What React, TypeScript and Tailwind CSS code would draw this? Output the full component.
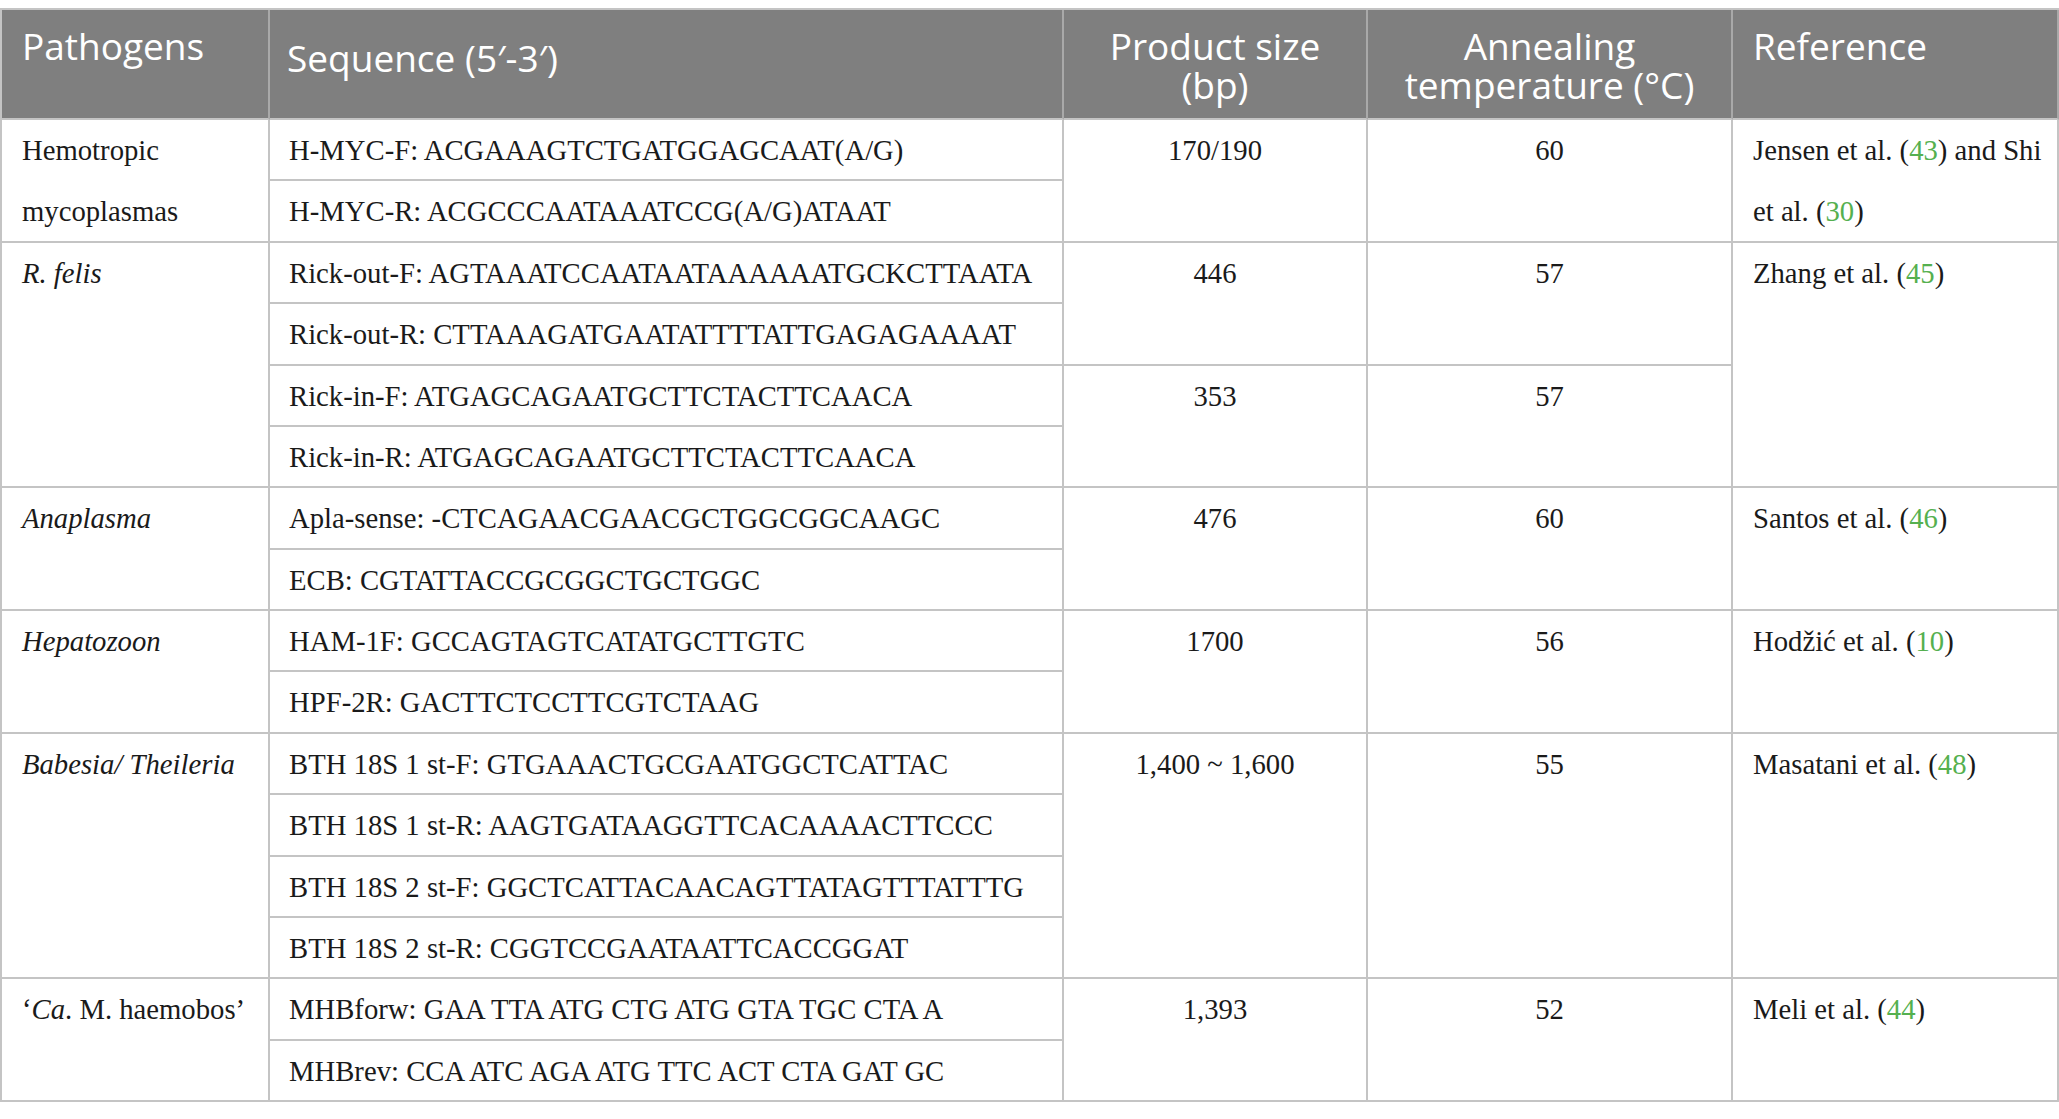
import React from 'react';

type Ref = { name: string; num: string; tail?: string };

const serif = { fontFamily: '"Liberation Serif", "Times New Roman", serif' };
const sans = { fontFamily: '"Open Sans", "Noto Sans", sans-serif' };

const Cite: React.FC<{ r: Ref }> = ({ r }) => (
    <>
        {r.name} (<span className="text-[#55b04f]">{r.num}</span>){r.tail}
    </>
);

const head = "border-r-2 border-b-2 border-r-[#a9a9a9] border-b-[#c4c4c4] bg-[#7f7f7f] text-white text-[37px] leading-[39px]";
const cell = "border-r-2 border-b-2 border-[#c4c4c4] leading-[61.375px] text-[28.7px] text-[#1a1a1a]";

export default function App() {
    return (
        <div className="min-h-screen bg-white pt-[8px]">
            <div
                className="grid w-full grid-cols-[268px_794px_304px_365px_1fr] grid-rows-[110px_repeat(16,61.375px)] border-l-2 border-t-2 border-[#c4c4c4]"
                style={serif}
            >
                {/* header */}
                <div className={`${head} pl-5 pt-4`} style={sans}>Pathogens</div>
                <div className={`${head} pl-[17px] pt-7`} style={sans}>Sequence (5′-3′)</div>
                <div className={`${head} pt-4 text-center`} style={sans}>
                    <div>Product size</div>
                    <div>(bp)</div>
                </div>
                <div className={`${head} pt-4 text-center`} style={sans}>
                    <div>Annealing</div>
                    <div>temperature (°C)</div>
                </div>
                <div className={`${head} pl-5 pt-4`} style={sans}>Reference</div>

                {/* Hemotropic mycoplasmas */}
                <div className={`${cell} row-span-2 pl-5 pr-2`}>Hemotropic mycoplasmas</div>
                <div className={`${cell} pl-[19px] whitespace-nowrap`}>H-MYC-F: ACGAAAGTCTGATGGAGCAAT(A/G)</div>
                <div className={`${cell} row-span-2 text-center`}>170/190</div>
                <div className={`${cell} row-span-2 text-center`}>60</div>
                <div className={`${cell} row-span-2 pl-5 pr-2`}>
                    <Cite r={{ name: 'Jensen et al.', num: '43' }} /> and Shi <Cite r={{ name: 'et al.', num: '30' }} />
                </div>
                <div className={`${cell} pl-[19px] whitespace-nowrap`}>H-MYC-R: ACGCCCAATAAATCCG(A/G)ATAAT</div>

                {/* R. felis */}
                <div className={`${cell} row-span-4 pl-5 pr-2 italic`}>R. felis</div>
                <div className={`${cell} pl-[19px] whitespace-nowrap`}>Rick-out-F: AGTAAATCCAATAATAAAAAATGCKCTTAATA</div>
                <div className={`${cell} row-span-2 text-center`}>446</div>
                <div className={`${cell} row-span-2 text-center`}>57</div>
                <div className={`${cell} row-span-4 pl-5 pr-2`}>
                    <Cite r={{ name: 'Zhang et al.', num: '45' }} />
                </div>
                <div className={`${cell} pl-[19px] whitespace-nowrap`}>Rick-out-R: CTTAAAGATGAATATTTTATTGAGAGAAAAT</div>
                <div className={`${cell} pl-[19px] whitespace-nowrap`}>Rick-in-F: ATGAGCAGAATGCTTCTACTTCAACA</div>
                <div className={`${cell} row-span-2 text-center`}>353</div>
                <div className={`${cell} row-span-2 text-center`}>57</div>
                <div className={`${cell} pl-[19px] whitespace-nowrap`}>Rick-in-R: ATGAGCAGAATGCTTCTACTTCAACA</div>

                {/* Anaplasma */}
                <div className={`${cell} row-span-2 pl-5 pr-2 italic`}>Anaplasma</div>
                <div className={`${cell} pl-[19px] whitespace-nowrap`}>Apla-sense: -CTCAGAACGAACGCTGGCGGCAAGC</div>
                <div className={`${cell} row-span-2 text-center`}>476</div>
                <div className={`${cell} row-span-2 text-center`}>60</div>
                <div className={`${cell} row-span-2 pl-5 pr-2`}>
                    <Cite r={{ name: 'Santos et al.', num: '46' }} />
                </div>
                <div className={`${cell} pl-[19px] whitespace-nowrap`}>ECB: CGTATTACCGCGGCTGCTGGC</div>

                {/* Hepatozoon */}
                <div className={`${cell} row-span-2 pl-5 pr-2 italic`}>Hepatozoon</div>
                <div className={`${cell} pl-[19px] whitespace-nowrap`}>HAM-1F: GCCAGTAGTCATATGCTTGTC</div>
                <div className={`${cell} row-span-2 text-center`}>1700</div>
                <div className={`${cell} row-span-2 text-center`}>56</div>
                <div className={`${cell} row-span-2 pl-5 pr-2`}>
                    <Cite r={{ name: 'Hodžić et al.', num: '10' }} />
                </div>
                <div className={`${cell} pl-[19px] whitespace-nowrap`}>HPF-2R: GACTTCTCCTTCGTCTAAG</div>

                {/* Babesia / Theileria */}
                <div className={`${cell} row-span-4 pl-5 pr-2 italic whitespace-nowrap`}>Babesia/ Theileria</div>
                <div className={`${cell} pl-[19px] whitespace-nowrap`}>BTH 18S 1 st-F: GTGAAACTGCGAATGGCTCATTAC</div>
                <div className={`${cell} row-span-4 text-center`}>1,400 ~ 1,600</div>
                <div className={`${cell} row-span-4 text-center`}>55</div>
                <div className={`${cell} row-span-4 pl-5 pr-2`}>
                    <Cite r={{ name: 'Masatani et al.', num: '48' }} />
                </div>
                <div className={`${cell} pl-[19px] whitespace-nowrap`}>BTH 18S 1 st-R: AAGTGATAAGGTTCACAAAACTTCCC</div>
                <div className={`${cell} pl-[19px] whitespace-nowrap`}>BTH 18S 2 st-F: GGCTCATTACAACAGTTATAGTTTATTTG</div>
                <div className={`${cell} pl-[19px] whitespace-nowrap`}>BTH 18S 2 st-R: CGGTCCGAATAATTCACCGGAT</div>

                {/* Ca. M. haemobos */}
                <div className={`${cell} row-span-2 pl-5 pr-1 whitespace-nowrap`}>
                    ‘<i>Ca</i>. M. haemobos’
                </div>
                <div className={`${cell} pl-[19px] whitespace-nowrap`}>MHBforw: GAA TTA ATG CTG ATG GTA TGC CTA A</div>
                <div className={`${cell} row-span-2 text-center`}>1,393</div>
                <div className={`${cell} row-span-2 text-center`}>52</div>
                <div className={`${cell} row-span-2 pl-5 pr-2`}>
                    <Cite r={{ name: 'Meli et al.', num: '44' }} />
                </div>
                <div className={`${cell} pl-[19px] whitespace-nowrap`}>MHBrev: CCA ATC AGA ATG TTC ACT CTA GAT GC</div>
            </div>
        </div>
    );
}
